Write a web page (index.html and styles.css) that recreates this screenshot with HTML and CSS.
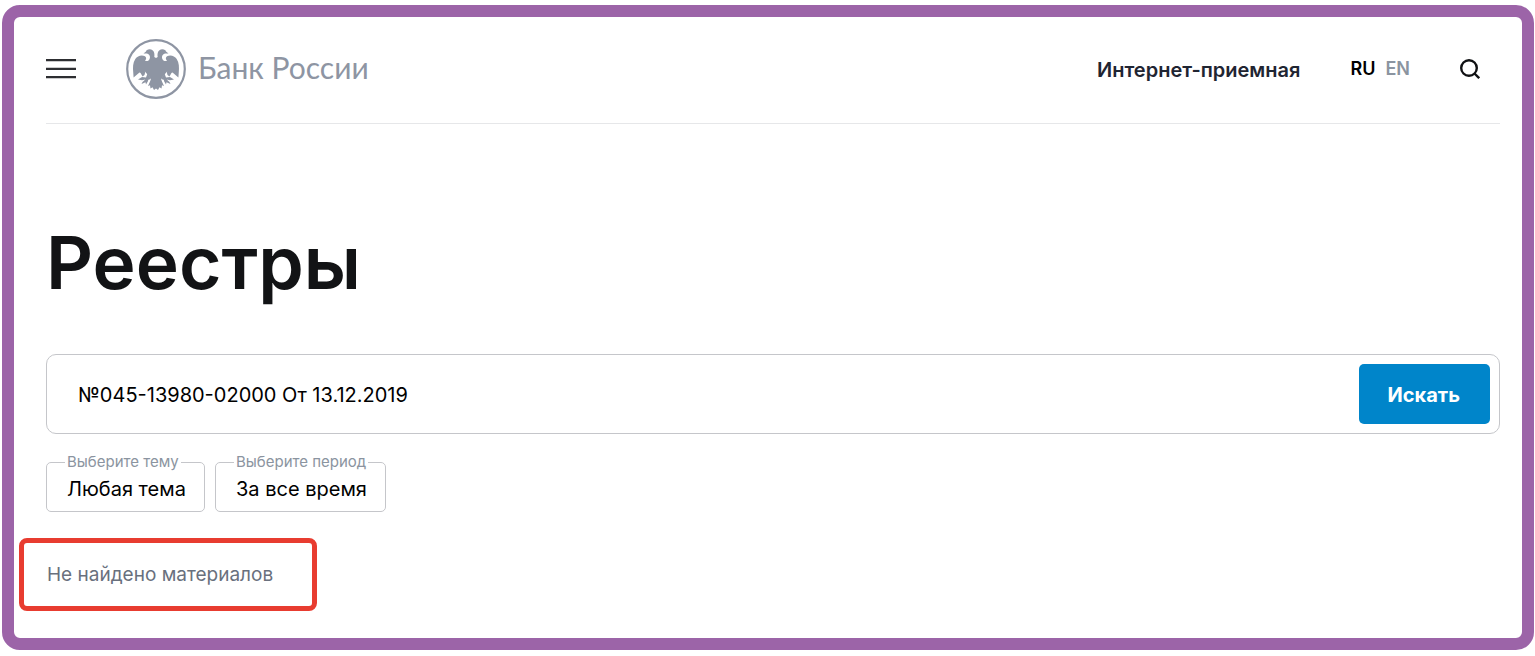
FILE: index.html
```html
<!DOCTYPE html>
<html lang="ru">
<head>
<meta charset="utf-8">
<meta name="viewport" content="width=device-width, initial-scale=1">
<title>Реестры | Банк России</title>
<link rel="stylesheet" href="styles.css">
</head>
<body>
<div class="frame">
  <header class="header">
    <button class="icon-button menu-button" type="button" aria-label="Меню">
      <svg width="30" height="20" viewBox="0 0 30 20" aria-hidden="true"><path d="M0 1.2h30M0 9.800h30M0 18.200h30" stroke="#2d2e31" stroke-width="2.3"/></svg>
    </button>
    <a class="logo" href="#">
      <svg width="60" height="60" viewBox="0 0 60 60" aria-hidden="true">
        <circle cx="30" cy="30" r="28.8" fill="none" stroke="#8e95a3" stroke-width="2.2"/>
        <g fill="#8e95a3">
          <g id="wing">
            <path d="M30 19L28.300 18C29 14 27.500 10.300 23.800 10.300C21.300 10.300 20.300 11.300 20 12.500L17.500 14.500L21 14.600C24 15.500 24.700 18.500 23.200 20.800C22.300 22.200 20.300 22.400 19 21.500C20.600 20.300 20.500 18.300 19 17.300C16 15.500 11.500 16.500 9.300 20C6.800 24 6.800 28.500 7.200 33L7.600 38.500L10.500 36L13.500 33.500L16.500 34L19 32.500L21 35L25 40L23.800 43L22 47L24 46.300L24.500 49.500L26.500 48.300L28 51L30 49.500Z"/>
            <path d="M21.500 34.500L20 38.500L16 38L12 40.500L16 41.200L19.300 40.500L16.500 43L15.500 45L19.500 43.300L20 45.500L21.800 42.500L22.300 40.800L25 40Z"/>
            <path d="M14 33L16.500 37.500L18.500 36L19.500 32Z"/>
          </g>
          <use href="#wing" transform="matrix(-1 0 0 1 60 0)"/>
        </g>
      </svg>
      <span class="logo-text">Банк России</span>
    </a>
    <nav class="nav">
      <a class="reception" href="#">Интернет-приемная</a>
      <div class="languages">
        <a class="language" href="#" aria-current="true">RU</a>
        <a class="language language-muted" href="#">EN</a>
      </div>
      <button class="icon-button" type="button" aria-label="Поиск">
        <svg width="20" height="20" viewBox="0 0 20 20" fill="none" stroke="#111214" stroke-width="2.400" aria-hidden="true"><circle cx="9" cy="9" r="7.800"/><path d="M14.500 14.500L19.200 19.200"/></svg>
      </button>
    </nav>
  </header>
  <main>
    <h1 class="title">Реестры</h1>
    <form>
      <div class="search">
        <input class="search-input" type="text" aria-label="Поиск по реестрам" value="№045-13980-02000 От 13.12.2019">
        <button class="search-button" type="submit">Искать</button>
      </div>
      <div class="filters">
        <fieldset class="filter">
          <legend class="filter-legend"><label for="topic">Выберите тему</label></legend>
          <select class="filter-select" id="topic"><option>Любая тема</option></select>
        </fieldset>
        <fieldset class="filter">
          <legend class="filter-legend"><label for="period">Выберите период</label></legend>
          <select class="filter-select" id="period"><option>За все время</option></select>
        </fieldset>
      </div>
    </form>
    <p class="result">Не найдено материалов</p>
  </main>
</div>
</body>
</html>
```
FILE: styles.css
```css
* { box-sizing: border-box; }

body {
  display: flex;
  min-height: 100vh;
  margin: 0;
  padding: 5px 1px 6px 2px;
  background: #fff;
  color: #000;
  font: 20px/24px Inter, "Noto Sans", sans-serif;
}

a { color: inherit; text-decoration: none; }

button, input, select { font: inherit; color: inherit; }

.frame {
  flex: 1;
  padding: 0 22px 0 32px;
  border: 12px solid #9c64a8;
  border-radius: 18px;
}

.header {
  display: flex;
  align-items: center;
  height: 107px;
  padding: 0 20px 2px 0;
  border-bottom: 1px solid #e6e7e9;
}

.icon-button {
  display: flex;
  padding: 0;
  border: 0;
  background: none;
}

.menu-button { margin-right: 50px; }

.logo {
  display: flex;
  align-items: center;
  gap: 12px;
}

.logo-text {
  padding-bottom: 4px;
  color: #8e95a3;
  font: 30px/36px Lato, sans-serif;
}

.nav {
  display: flex;
  align-items: center;
  gap: 50px;
  margin-left: auto;
}

.reception {
  padding-top: 2px;
  color: #1f2532;
  font-weight: 600;
}

.languages {
  display: flex;
  gap: 10px;
}

.language {
  font-size: 18px;
  font-weight: 600;
}

.language-muted { color: #8b94a0; }

.title {
  margin: 93px 0 0;
  color: #121315;
  font-size: 73px;
  font-weight: 600;
  line-height: 92px;
}

.search {
  display: flex;
  height: 80px;
  margin-top: 45px;
  padding: 9px;
  border: 1px solid #c5c6ca;
  border-radius: 10px;
}

.search-input {
  flex: 1;
  min-width: 0;
  padding: 2px 22px 0;
  border: 0;
  outline: 0;
  background: none;
}

.search-button {
  padding: 2px 30px 0 29px;
  border: 0;
  border-radius: 5px;
  background: #0085ca;
  color: #fff;
  font-weight: 700;
}

.filters {
  display: flex;
  gap: 10px;
  margin-top: 19px;
}

.filter {
  min-width: 0;
  margin: 0;
  padding: 6px 16px 10px 18px;
  border: 1px solid #c5c6ca;
  border-radius: 5px;
}

.filter-legend {
  padding: 0 2px;
  color: #8b94a0;
  font-size: 15px;
  line-height: 18px;
}

.filter-select {
  display: block;
  padding: 0 2px;
  border: 0;
  background: none;
  appearance: none;
}

.result {
  width: fit-content;
  margin: 26px 0 27px -27px;
  padding: 20px 39px 19px 23px;
  border: 5px solid #e83c30;
  border-radius: 8px;
  color: #69707d;
  font-size: 19px;
}
```
